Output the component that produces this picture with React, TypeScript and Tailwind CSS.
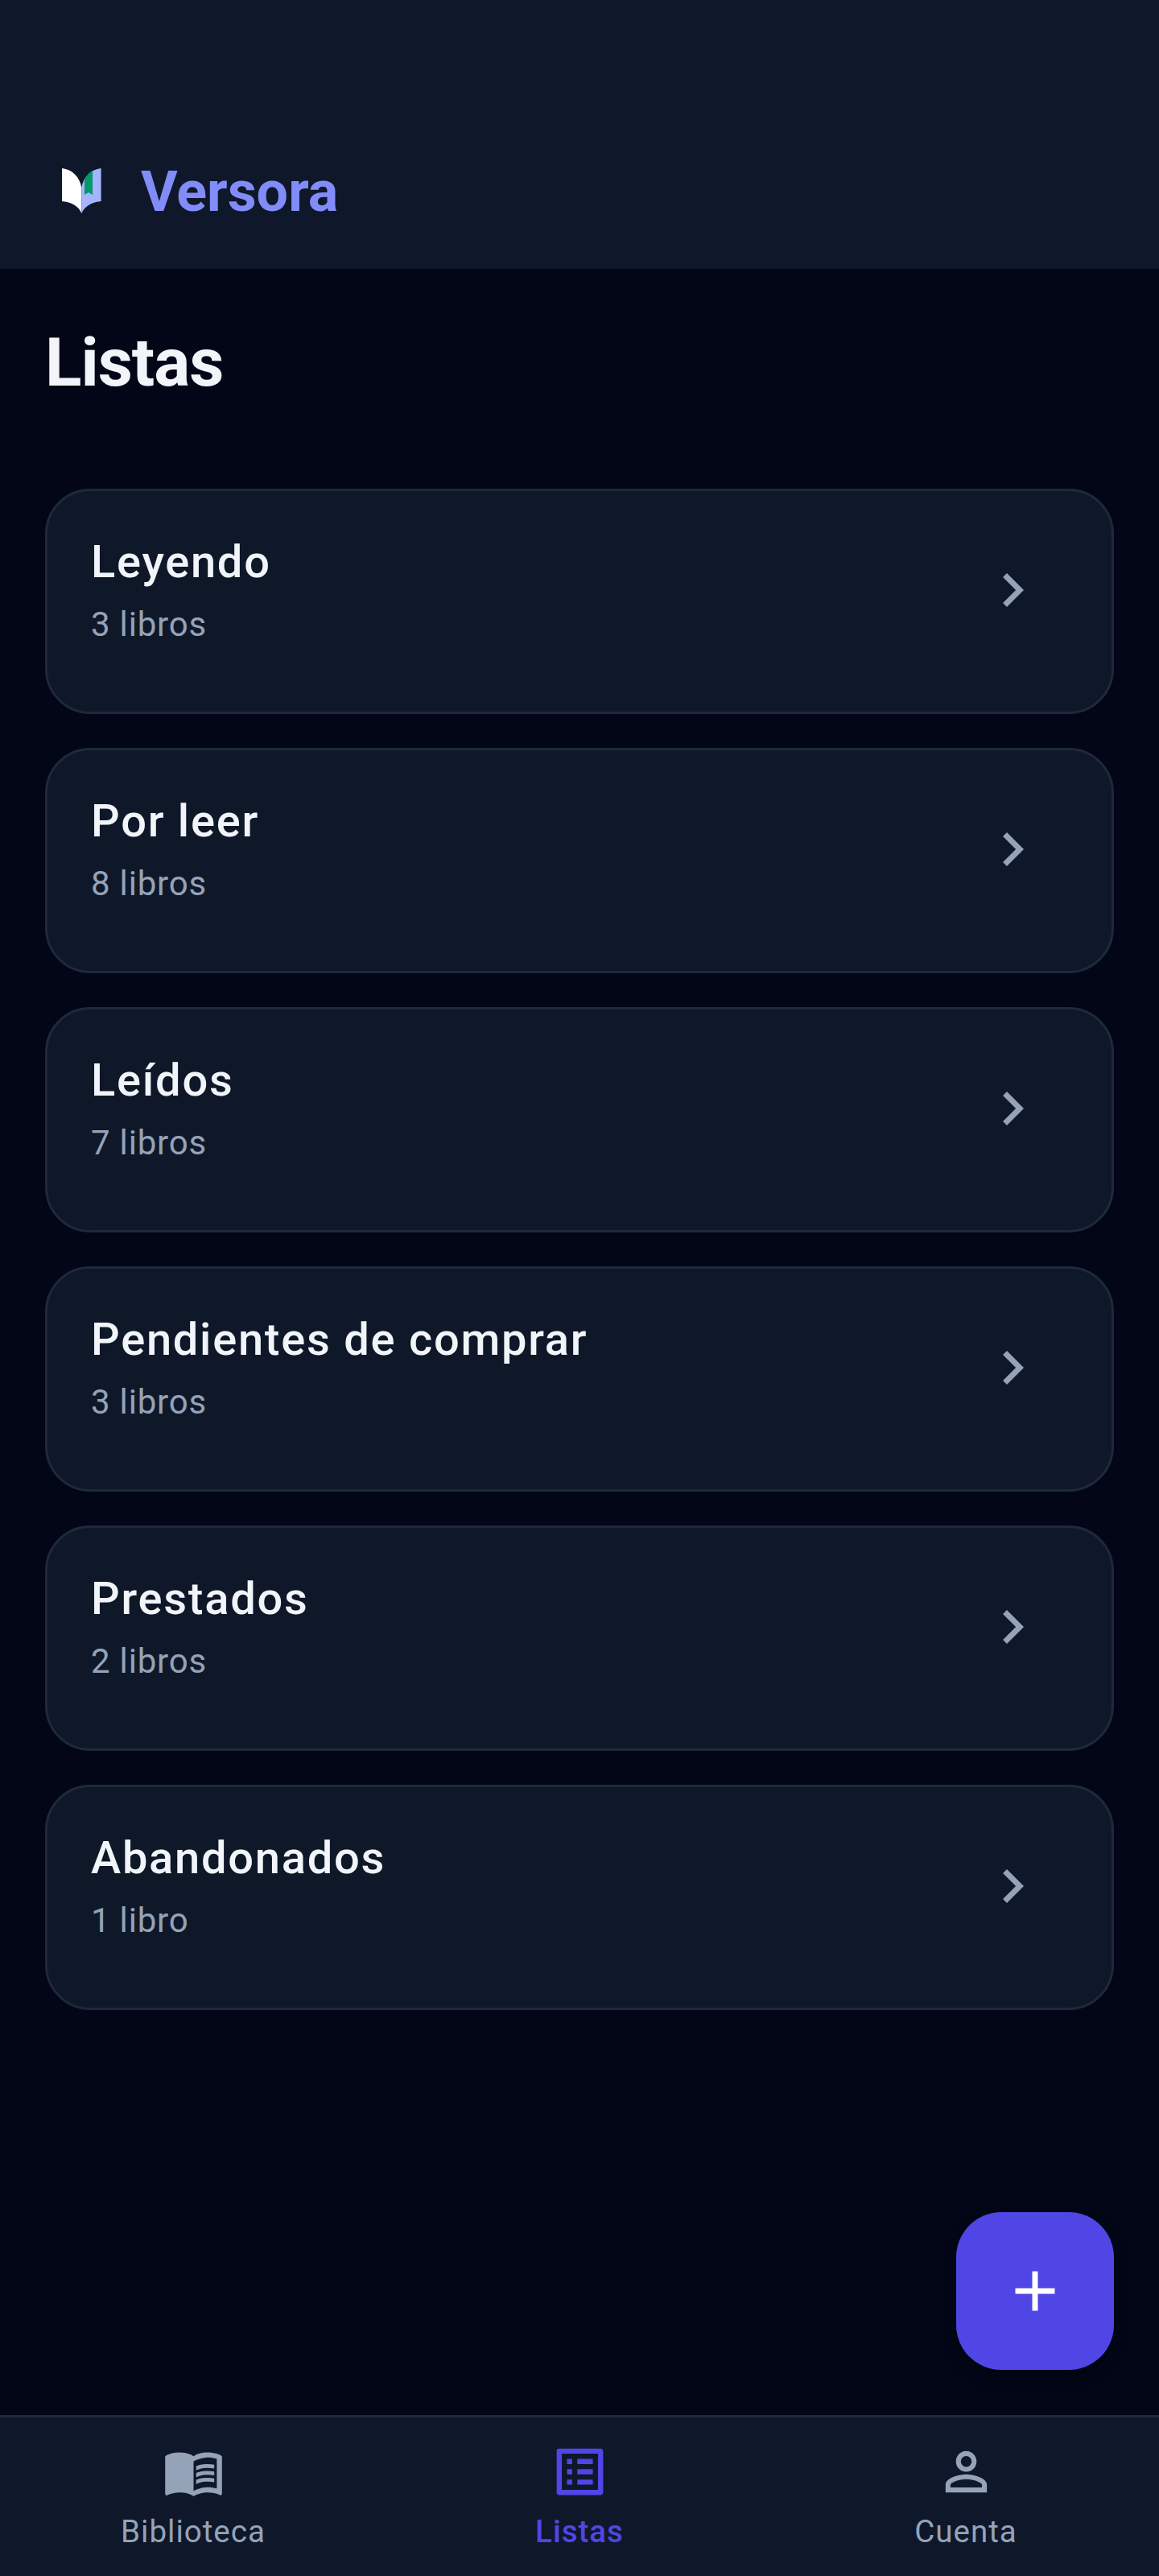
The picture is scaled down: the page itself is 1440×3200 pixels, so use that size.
import { MdMenuBook, MdOutlineListAlt, MdPersonOutline, MdChevronRight, MdAdd } from "react-icons/md";

const lists = [
  { name: "Leyendo", count: "3 libros" },
  { name: "Por leer", count: "8 libros" },
  { name: "Leídos", count: "7 libros" },
  { name: "Pendientes de comprar", count: "3 libros" },
  { name: "Prestados", count: "2 libros" },
  { name: "Abandonados", count: "1 libro" },
];

function Logo() {
  return (
    <svg width="49" height="56" viewBox="0 0 49 56" className="shrink-0">
      <path d="M0 0C13 1.5 22 11 24.3 24V56C21 48 13 42 0 41Z" fill="#ffffff" />
      <path d="M24.3 24C26.5 11 36 1.5 48.6 0V41C36 42 28 48 24.3 56Z" fill="#a5b4fc" />
      <path d="M28 14C30 9 34 5 38 3V33L33 30L28 33Z" fill="#059669" />
    </svg>
  );
}

function NavItem({ icon, label, active }: { icon: React.ReactNode; label: string; active?: boolean }) {
  return (
    <div className={`flex w-[480px] flex-col items-center ${active ? "text-[#4f46e5]" : "text-[#94a3b8]"}`}>
      {icon}
      <span className={`mt-[10px] text-[38.5px] leading-[52px] tracking-[1px] ${active ? "font-medium" : "font-normal"}`}>{label}</span>
    </div>
  );
}

export default function App() {
  return (
    <div className="relative flex h-[3200px] w-[1440px] flex-col bg-[#020617] font-['Roboto',sans-serif]">
      <header className="flex h-[334px] items-start bg-[#0f172a] pl-[77px] pt-[209px]">
        <Logo />
        <span className="ml-[49px] mt-[-19px] text-[70px] font-bold leading-[96px] text-[#818cf8]">Versora</span>
      </header>
      <main className="flex flex-1 flex-col px-[56px]">
        <h1 className="mt-[68px] text-[84px] font-bold leading-[98px] tracking-[-1px] text-[#f1f5f9]">Listas</h1>
        <div className="mt-[107px] flex flex-col gap-[42px]">
          {lists.map((l) => (
            <div key={l.name} className="flex h-[280px] items-start justify-between rounded-[56px] border-[3.5px] border-[#1e293b] bg-[#0f1829] pl-[54px] pr-[81px] pt-[53px]">
              <div>
                <div className="mt-[-2px] text-[56px] font-medium leading-[74px] tracking-[1.75px] text-[#f1f5f9]">{l.name}</div>
                <div className="mt-[13px] text-[42px] leading-[56px] tracking-[0.8px] text-[#94a3b8]">{l.count}</div>
              </div>
              <MdChevronRight size={84} className="mt-[28px] text-[#94a3b8]" />
            </div>
          ))}
        </div>
      </main>
      <button className="absolute left-[1188px] top-[2748px] flex h-[196px] w-[196px] items-center justify-center rounded-[56px] bg-[#4f46e5] text-white shadow-[0_10px_20px_rgba(0,0,0,0.25)]">
        <MdAdd size={84} />
      </button>
      <nav className="flex h-[200px] border-t-[3.5px] border-[#1e293b] bg-[#0f172a] pt-[29px]">
        <NavItem icon={<MdMenuBook size={77} />} label="Biblioteca" />
        <NavItem icon={<MdOutlineListAlt size={77} />} label="Listas" active />
        <NavItem icon={<MdPersonOutline size={77} />} label="Cuenta" />
      </nav>
    </div>
  );
}
